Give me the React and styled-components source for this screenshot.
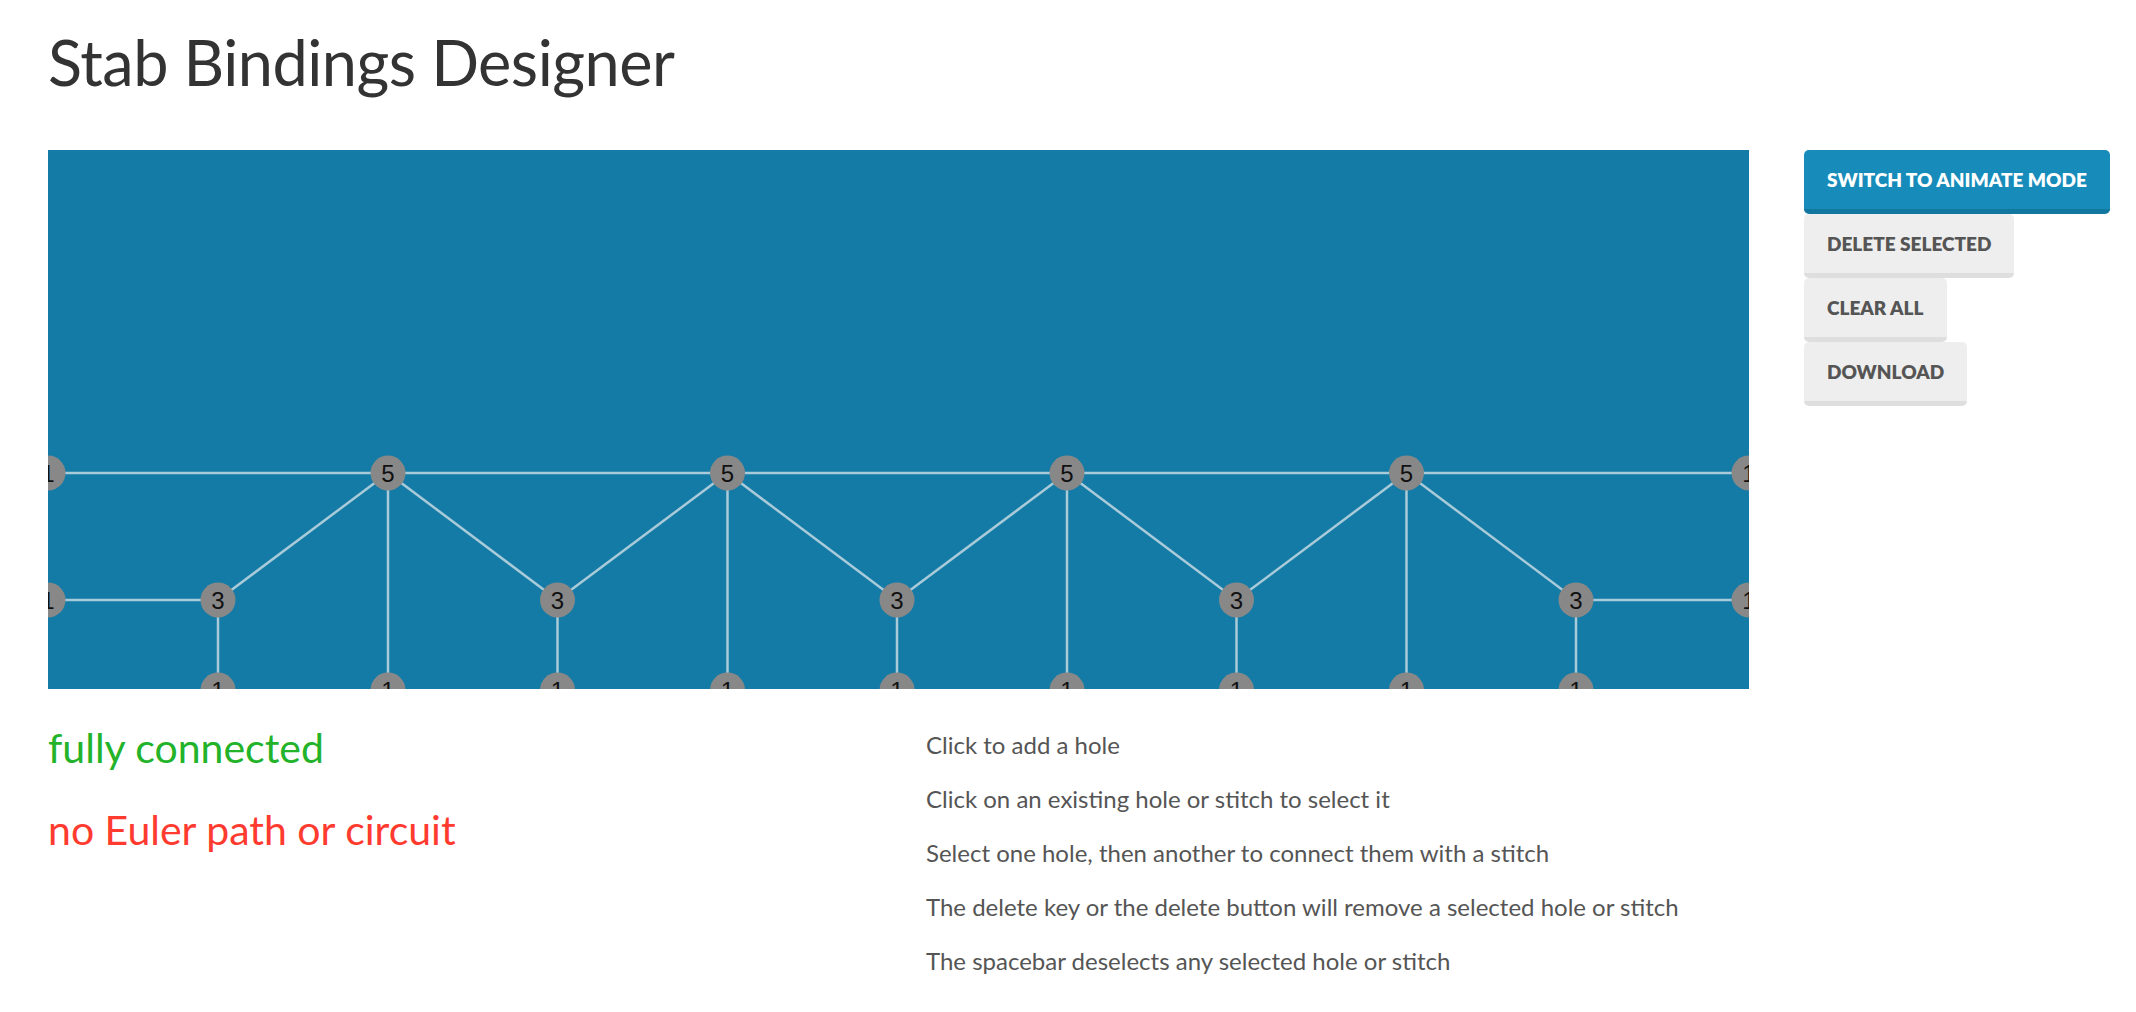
import React from 'react'
import styled, { createGlobalStyle } from 'styled-components'

const GlobalStyle = createGlobalStyle`
    body {
        margin: 0;
        background: #fff;
        font-family: Lato, "Liberation Sans", sans-serif;
        color: #333;
    }
`

const Pagina = styled.div`
    padding: 0 0 0 48px;
`

const Titulo = styled.h1`
    margin: 0;
    padding-top: 22px;
    height: 150px;
    box-sizing: border-box;
    font-size: 63px;
    font-weight: 400;
    line-height: 80px;
    color: #333;
    letter-spacing: -0.5px;
`

const AreaPrincipal = styled.div`
    display: flex;
    align-items: flex-start;
    gap: 55px;
`

const Quadro = styled.div`
    width: 1701px;
    height: 539px;
    background: #137ba5;
    overflow: hidden;
    flex-shrink: 0;
`

const ColunaBotoes = styled.div`
    display: flex;
    flex-direction: column;
    align-items: flex-start;
`

const Botao = styled.button`
    height: 64px;
    padding: 0 23px;
    border: none;
    border-bottom: 5px solid ${props => props.primario ? '#12779f' : '#dedede'};
    border-radius: 5px;
    background: ${props => props.primario ? '#178cba' : '#eeeeee'};
    color: ${props => props.primario ? '#ffffff' : '#555555'};
    font-family: Lato, "Liberation Sans", sans-serif;
    font-weight: 800;
    font-size: 19px;
    text-transform: uppercase;
    cursor: pointer;
`

const Rodape = styled.div`
    display: grid;
    grid-template-columns: 878px 1fr;
    padding-top: 29px;
`

const Estado = styled.p`
    margin: 0 0 22px 0;
    font-size: 41px;
    line-height: 60px;
    color: ${props => props.ok ? '#22b32a' : '#ff3b30'};
`

const ListaInstrucoes = styled.div`
    display: flex;
    flex-direction: column;
`

const Instrucao = styled.p`
    margin: 0;
    font-size: 24px;
    line-height: 54px;
    color: #555;
`

const LARGURA = 1701
const Y1 = 323
const Y2 = 450
const Y3 = 540
const PASSO = 339.5

const cincos = [0, 1, 2, 3].map(i => 340 + i * PASSO)
const tres = [0, 1, 2, 3, 4].map(i => 170 + i * PASSO)

const furos = [
    { x: 0, y: Y1, n: 1 },
    { x: LARGURA, y: Y1, n: 1 },
    { x: 0, y: Y2, n: 1 },
    { x: LARGURA, y: Y2, n: 1 },
    ...cincos.map(x => ({ x, y: Y1, n: 5 })),
    ...tres.map(x => ({ x, y: Y2, n: 3 })),
    ...[...cincos, ...tres].map(x => ({ x, y: Y3, n: 1 })),
]

const pontos = [
    [0, Y1, LARGURA, Y1],
    [0, Y2, tres[0], Y2],
    [tres[4], Y2, LARGURA, Y2],
    ...cincos.map((x, i) => [tres[i], Y2, x, Y1]),
    ...cincos.map((x, i) => [x, Y1, tres[i + 1], Y2]),
    ...cincos.map(x => [x, Y1, x, Y3]),
    ...tres.map(x => [x, Y2, x, Y3]),
]

const Grafo = () => (
    <svg width={LARGURA} height={539} viewBox={`0 0 ${LARGURA} 539`}>
        {pontos.map((p, i) => (
            <line key={i} x1={p[0]} y1={p[1]} x2={p[2]} y2={p[3]} stroke="#a8cad9" strokeWidth="2.5" />
        ))}
        {furos.map((f, i) => (
            <g key={i}>
                <circle cx={f.x} cy={f.y} r="17.5" fill="#888888" />
                <text
                    x={f.x}
                    y={f.y + 8.5}
                    textAnchor="middle"
                    fontFamily="'Liberation Sans', Arial, sans-serif"
                    fontSize="24"
                    fill="#111"
                >
                    {f.n}
                </text>
            </g>
        ))}
    </svg>
)

const instrucoes = [
    'Click to add a hole',
    'Click on an existing hole or stitch to select it',
    'Select one hole, then another to connect them with a stitch',
    'The delete key or the delete button will remove a selected hole or stitch',
    'The spacebar deselects any selected hole or stitch',
]

export default function App() {
    return (
        <Pagina>
            <GlobalStyle />
            <Titulo>Stab Bindings Designer</Titulo>
            <AreaPrincipal>
                <Quadro>
                    <Grafo />
                </Quadro>
                <ColunaBotoes>
                    <Botao primario>Switch to animate mode</Botao>
                    <Botao>Delete selected</Botao>
                    <Botao>Clear all</Botao>
                    <Botao>Download</Botao>
                </ColunaBotoes>
            </AreaPrincipal>
            <Rodape>
                <div>
                    <Estado ok>fully connected</Estado>
                    <Estado>no Euler path or circuit</Estado>
                </div>
                <ListaInstrucoes>
                    {instrucoes.map(t => (
                        <Instrucao key={t}>{t}</Instrucao>
                    ))}
                </ListaInstrucoes>
            </Rodape>
        </Pagina>
    )
}
